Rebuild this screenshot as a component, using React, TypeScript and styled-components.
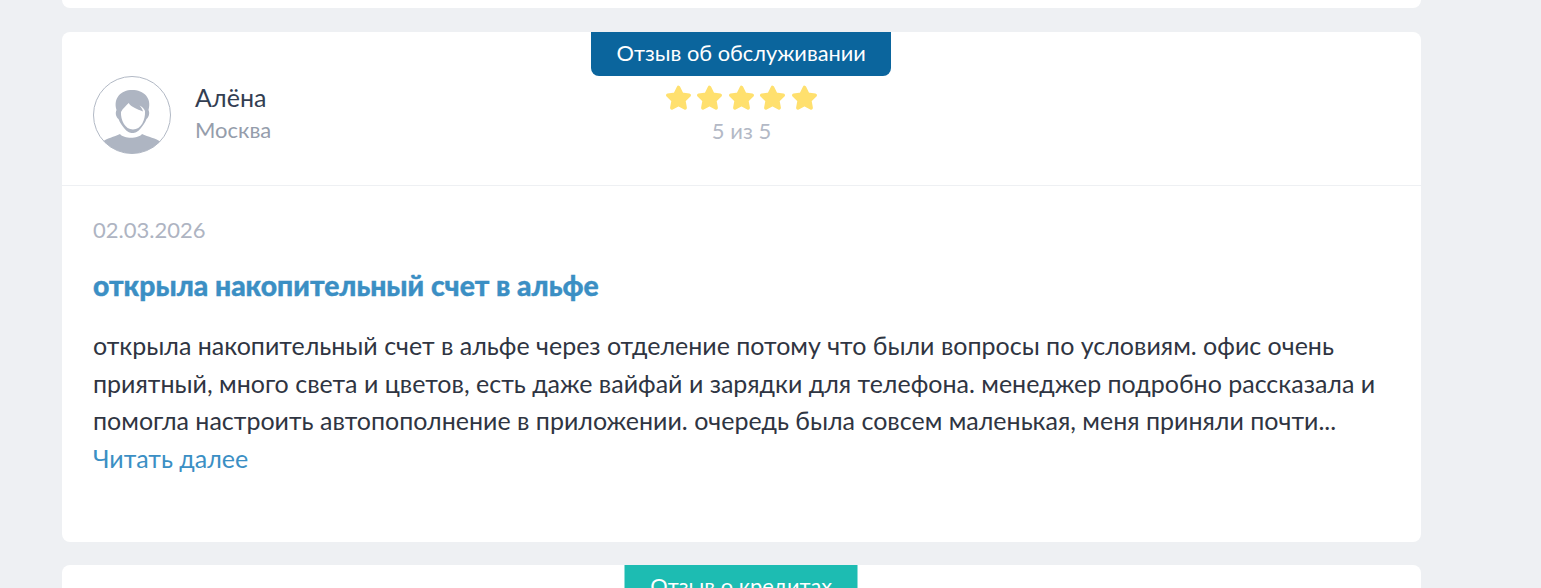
import React from "react";
import styled, { createGlobalStyle } from "styled-components";

const Global = createGlobalStyle`
  html, body { margin: 0; padding: 0; height: 588px; overflow: hidden; background: #eef0f3; }
  body { font-family: Lato, "Noto Sans", sans-serif; }
`;

const Page = styled.div`
  display: flex;
  flex-direction: column;
  padding: 0 120px 0 62px;
`;

const Stub = styled.div`
  height: 8px;
  margin-bottom: 24px;
  background: #fff;
  border-radius: 0 0 8px 8px;
`;

const Card = styled.article`
  position: relative;
  flex: none;
  margin-bottom: 23px;
  background: #fff;
  border-radius: 8px;
`;

const Badge = styled.div<{ $bg: string; $w: number }>`
  position: absolute;
  top: 0;
  left: calc(50% - 0.25px);
  transform: translateX(-50%);
  width: ${(p) => p.$w}px;
  height: 44px;
  line-height: 41px;
  text-align: center;
  white-space: nowrap;
  color: #fff;
  font-size: 21.8px;
  background: ${(p) => p.$bg};
  border-radius: 0 0 8px 8px;
`;

const Header = styled.header`
  position: relative;
  display: flex;
  align-items: center;
  padding: 44px 31px 31px;
  border-bottom: 1px solid #eef0f3;
`;

const Author = styled.div`
  display: flex;
  align-items: center;
  gap: 24px;
`;

const Avatar = styled.svg`
  width: 78px;
  height: 78px;
  display: block;
`;

const AuthorText = styled.div`
  display: flex;
  flex-direction: column;
  gap: 4px;
  padding-bottom: 4px;
`;

const Name = styled.div`
  font-size: 25px;
  line-height: 30px;
  color: #333e52;
`;

const City = styled.div`
  font-size: 22px;
  line-height: 28px;
  color: #959dab;
`;

const RatingBox = styled.div`
  position: absolute;
  left: 50%;
  top: 53px;
  transform: translateX(-50%);
  display: flex;
  flex-direction: column;
  align-items: center;
  gap: 6px;
`;

const Stars = styled.div`
  display: flex;
  gap: 5px;
  margin-left: -1px;
`;

const Star = styled.svg`
  width: 26.5px;
  height: 26px;
  display: block;
`;

const RatingText = styled.div`
  font-size: 22px;
  line-height: 28px;
  color: #b3b9c6;
`;

const Body = styled.div`
  padding: 27px 31px 65px;
`;

const DateText = styled.div`
  font-size: 22px;
  line-height: 34px;
  color: #aeb4c2;
`;

const Title = styled.h3`
  margin: 21px 0 0;
  font-size: 28.3px;
  line-height: 34px;
  font-weight: 900;
  color: #3b8fc4;
  -webkit-text-stroke: 0.4px #3b8fc4;
`;

const Text = styled.p`
  margin: 25px 0 0;
  font-size: 25px;
  line-height: 37.5px;
  color: #2f3542;
`;

const More = styled.a`
  display: block;
  font-size: 25px;
  line-height: 37.5px;
  color: #3b8fc4;
  text-decoration: none;
`;

const AvatarIcon = () => (
  <Avatar viewBox="0 0 78 78">
    <defs>
      <clipPath id="av"><circle cx="39" cy="39" r="38.5" /></clipPath>
    </defs>
    <circle cx="39" cy="39" r="38.5" fill="#fff" stroke="#b2b9c5" strokeWidth="1" />
    <g clipPath="url(#av)" fill="#aeb5c2">
      <path d="M9 66 C14 62 21 61 27 58 C31 63 45 63 49 58 C55 61 63 62 68 66 L68 78 L9 78 Z" />
      <path d="M25.5 43 C23 41 22 37 23.5 34 C20 22 28 14 39 14 C51 14 59 22 55.5 34 C57 37 56 41 53.5 43 C52 47 50 49 48 52 C45 56 42 57 39.5 57 C37 57 34 56 31 52 C29 49 27 47 25.5 43 Z" />
    </g>
    <path d="M28 36 C30 32 33 30 35.7 27 C38 31 44 33 50 35.5 C49.5 33.5 48.5 31.5 46.5 29.5 C49 30.5 51 32.5 52 35 C52.5 44 48 53.5 40 53.5 C32 53.5 27.5 44 28 36 Z" fill="#fff" />
  </Avatar>
);

const StarIcon = () => (
  <Star viewBox="0 0 26 26">
    <path
      d="M13 2.5 L16.3 9.2 L23.7 10.3 L18.3 15.5 L19.6 22.9 L13 19.4 L6.4 22.9 L7.7 15.5 L2.3 10.3 L9.7 9.2 Z"
      fill="#ffe06e"
      stroke="#ffe06e"
      strokeWidth="3.6"
      strokeLinejoin="round"
    />
  </Star>
);

export default function App() {
  return (
    <>
      <Global />
      <Page>
        <Stub />
        <Card>
          <Badge $bg="#0b659d" $w={300}>Отзыв об обслуживании</Badge>
          <Header>
            <Author>
              <AvatarIcon />
              <AuthorText>
                <Name>Алёна</Name>
                <City>Москва</City>
              </AuthorText>
            </Author>
            <RatingBox>
              <Stars>
                {[0, 1, 2, 3, 4].map((i) => (
                  <StarIcon key={i} />
                ))}
              </Stars>
              <RatingText>5 из 5</RatingText>
            </RatingBox>
          </Header>
          <Body>
            <DateText>02.03.2026</DateText>
            <Title>открыла накопительный счет в альфе</Title>
            <Text>
              открыла накопительный счет в альфе через отделение потому что были вопросы по условиям. офис очень приятный, много света и цветов, есть даже вайфай и зарядки для телефона. менеджер подробно рассказала и помогла настроить автопополнение в приложении. очередь была совсем маленькая, меня приняли почти...
            </Text>
            <More href="#">Читать далее</More>
          </Body>
        </Card>
        <Card>
          <Badge $bg="#1dbcb2" $w={233}>Отзыв о кредитах</Badge>
          <Header />
        </Card>
      </Page>
    </>
  );
}
